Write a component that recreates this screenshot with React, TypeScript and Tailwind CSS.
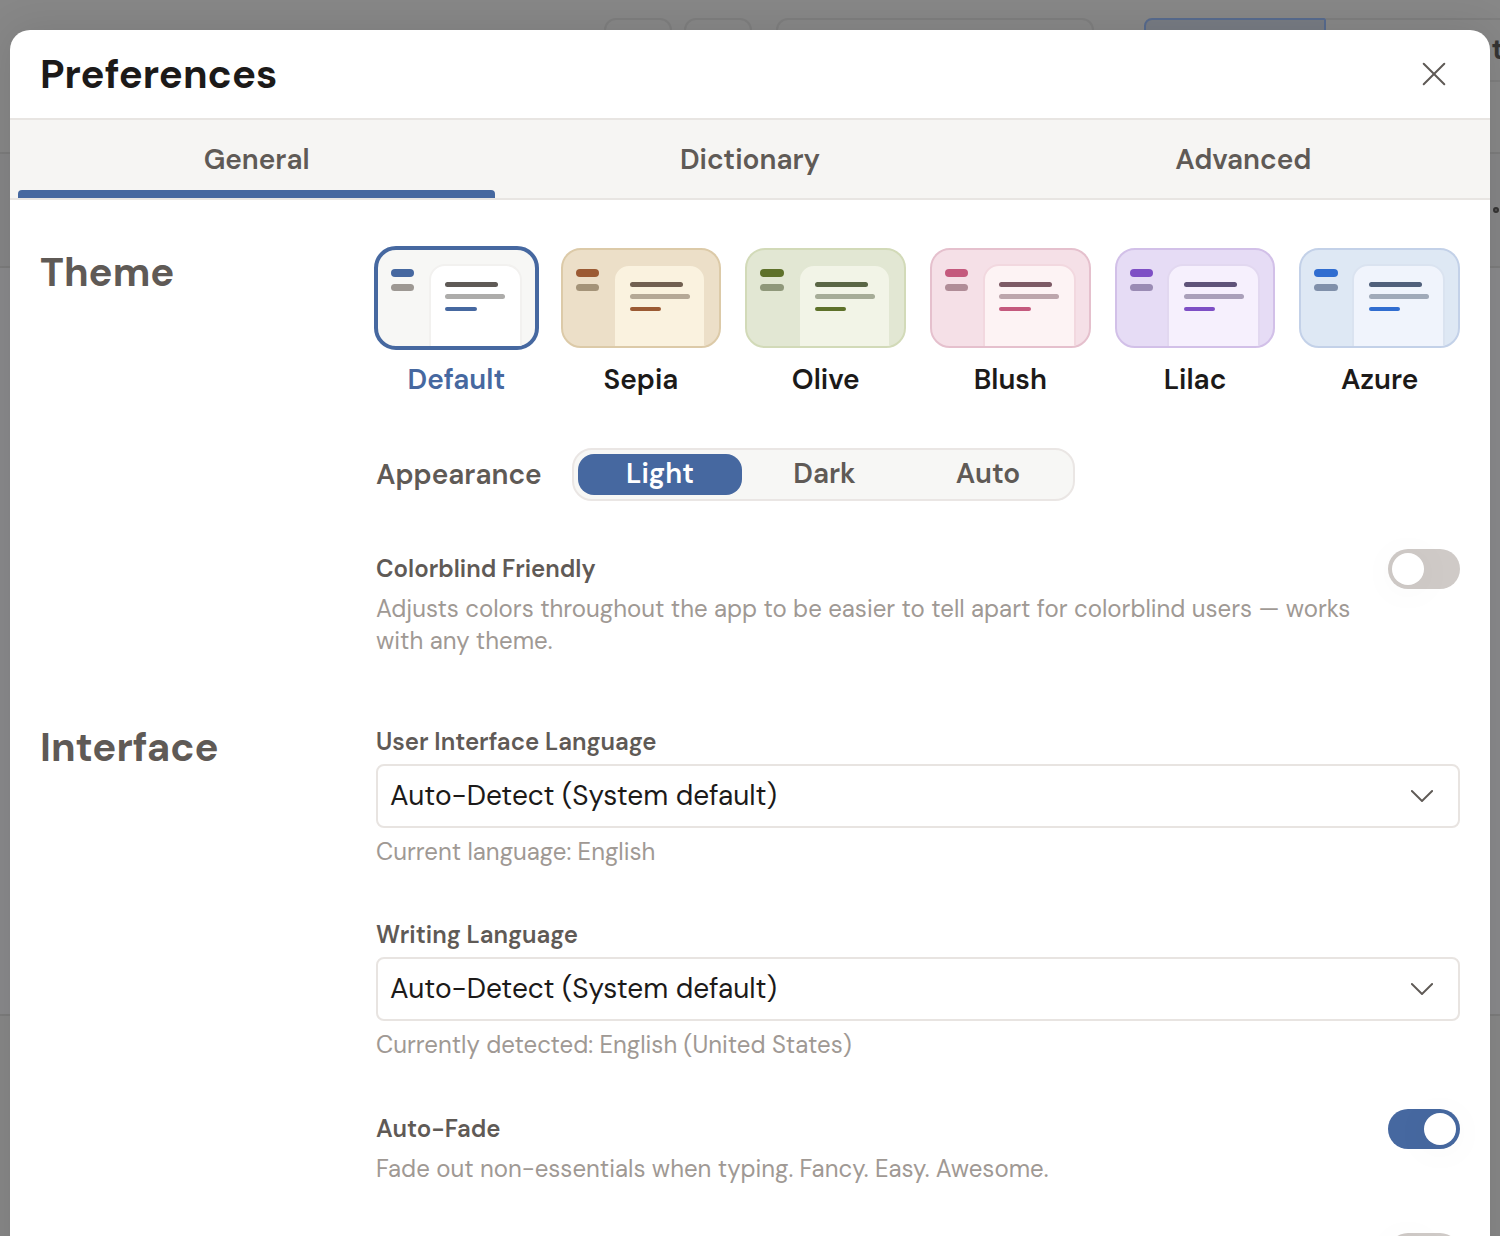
type ThemeOption = {
  name: string;
  card: string;
  page: string;
  accent: string;
  muted: string;
  heading: string;
  line: string;
};

const themes: ThemeOption[] = [
  { name: "Default", card: "bg-[#f7f7f5] border-[#4668a0]", page: "bg-white border-[#f2f1ef]", accent: "bg-[#4668a0]", muted: "bg-[#9d9893]", heading: "bg-[#5f5a56]", line: "bg-[#adacaa]" },
  { name: "Sepia", card: "bg-[#ecdfc8] border-[#dccaa8]", page: "bg-[#faf2df] border-[#ecdfc8]", accent: "bg-[#9b5a33]", muted: "bg-[#a49378]", heading: "bg-[#716051]", line: "bg-[#b5a896]" },
  { name: "Olive", card: "bg-[#e2e7d3] border-[#d2dab8]", page: "bg-[#f2f4e7] border-[#e2e7d3]", accent: "bg-[#5e712a]", muted: "bg-[#8f987a]", heading: "bg-[#5a6645]", line: "bg-[#a6ac97]" },
  { name: "Blush", card: "bg-[#f5e0e7] border-[#e5c0cd]", page: "bg-[#fdf3f4] border-[#f2d8df]", accent: "bg-[#c4597d]", muted: "bg-[#b08c97]", heading: "bg-[#7d5a65]", line: "bg-[#bda6ac]" },
  { name: "Lilac", card: "bg-[#e6dcf5] border-[#d2c0e8]", page: "bg-[#f6f0fd] border-[#e2d8f0]", accent: "bg-[#7e4fc5]", muted: "bg-[#9a8bb4]", heading: "bg-[#5f5379]", line: "bg-[#aaa0ba]" },
  { name: "Azure", card: "bg-[#dee8f4] border-[#c3d1e8]", page: "bg-[#f0f4fc] border-[#dae3f0]", accent: "bg-[#306dd0]", muted: "bg-[#8090aa]", heading: "bg-[#50607b]", line: "bg-[#a0aab9]" },
];

function ThemeCard({ theme, selected }: { theme: ThemeOption; selected: boolean }) {
  const frame = selected
    ? "-my-0.5 h-[104px] w-[calc(100%+4px)] rounded-[22px] border-4"
    : "h-[100px] w-full rounded-[20px] border-2";
  return (
    <button className="flex min-w-0 flex-1 flex-col items-center">
      <span className={`flex shrink-0 justify-between overflow-hidden px-[13px] ${frame} ${theme.card}`}>
        <span className="flex flex-col gap-[7px] pt-[19px]">
          <span className={`h-2 w-[23.4px] rounded-full ${theme.accent}`} />
          <span className={`h-[7px] w-[23.4px] rounded-full ${theme.muted}`} />
        </span>
        <span className={`mt-3.5 flex h-[90px] w-[93px] flex-col rounded-t-[16px] border-2 pl-[14.5px] pt-4 ${theme.page}`}>
          <span className={`h-[5px] w-[53px] rounded-full ${theme.heading}`} />
          <span className={`mt-[7px] h-[5px] w-[60px] rounded-full ${theme.line}`} />
          <span className={`mt-2 h-1 w-[31.5px] rounded-full ${theme.accent}`} />
        </span>
      </span>
      <span className={`mt-4 text-[28px] font-semibold leading-8 ${selected ? "text-[#4668a0]" : "text-[#1c1a19]"}`}>
        {theme.name}
      </span>
    </button>
  );
}

function Toggle({ on }: { on: boolean }) {
  return (
    <button role="switch" aria-checked={on} className={`flex h-10 w-[72px] shrink-0 rounded-full p-1 ${on ? "justify-end bg-[#4668a0]" : "bg-[#cfcac7]"}`}>
      <span className="size-8 rounded-full bg-white shadow-[0_4px_40px_rgba(0,0,0,0.05)]" />
    </button>
  );
}

function Select({ value }: { value: string }) {
  return (
    <button className="mt-1.5 flex h-16 w-full items-center justify-between rounded-lg border-2 border-[#e8e4e1] bg-white pl-3 pr-[25px] text-left text-[28px] leading-8 text-[#1c1a19]">
      <span>{value}</span>
      <svg className="h-3 w-[22px]" viewBox="0 0 22 12" fill="none" stroke="#5f5a56" strokeWidth="1.9" strokeLinecap="round" strokeLinejoin="round">
        <path d="M.9 1 11 11 21.1 1" />
      </svg>
    </button>
  );
}

function Backdrop() {
  return (
    <div className="absolute inset-0 bg-[#878787]">
      <div className="absolute inset-x-0 top-[152px] h-[116px] border-y-2 border-[#7c7c7c] bg-[#858586]" />
      <div className="absolute inset-x-0 top-[268px] h-[748px] border-b-2 border-[#7c7c7c] bg-[#89898b]" />
      <div className="absolute left-[604px] top-[18px] h-16 w-[68px] rounded-xl border-2 border-[#7e7e7e]" />
      <div className="absolute left-[684px] top-[18px] h-16 w-[68px] rounded-xl border-2 border-[#7e7e7e]" />
      <div className="absolute left-[776px] top-[18px] h-16 w-[318px] rounded-xl border-2 border-[#7e7e7e]" />
      <div className="absolute left-[1326px] top-[18px] h-16 w-[200px] border-y-2 border-[#7e7e7e]" />
      <div className="absolute left-[1144px] top-[18px] h-16 w-[182px] rounded-l-lg rounded-tr-[2px] border-2 border-[#576a8d] bg-[#777b83]" />
      <span className="absolute left-[1491.5px] top-[34px] text-[28px] font-bold leading-8 text-[#353433]">t</span>
      <span className="absolute left-[1493px] top-[207px] size-1.5 rounded-full border-2 border-[#353433] bg-[#5c5b5b]" />
    </div>
  );
}

const fieldTitle = "text-2xl font-semibold leading-8 text-[#5f5a56]";
const fieldHelp = "text-2xl leading-8 text-[#9f9994]";
const sectionTitle = "w-[336px] shrink-0 text-[40px] font-bold leading-[48px] text-[#5f5a56]";

export default function App() {
  return (
    <div className="relative h-[1236px] w-[1500px] overflow-hidden font-['DM_Sans',Inter,sans-serif]">
      <Backdrop />
      <div className="relative mx-2.5 mt-[30px] flex h-[1260px] flex-col overflow-hidden rounded-[20px] bg-white shadow-[0_0_40px_rgba(0,0,0,0.1)]">
        <header className="flex h-[90px] items-center justify-between border-b-2 border-[#e8e5e2] pl-[30px] pr-11">
          <h1 className="text-[40px] font-bold leading-[48px] text-[#1c1a19]">Preferences</h1>
          <button aria-label="Close">
            <svg className="size-6" viewBox="0 0 24 24" fill="none" stroke="#5f5a56" strokeWidth="2" strokeLinecap="round">
              <path d="m1.7 1.7 20.6 20.6M22.3 1.7 1.7 22.3" />
            </svg>
          </button>
        </header>

        <nav className="flex h-20 border-b-2 border-[#e8e5e2] bg-[#f6f5f3] text-[28px] font-semibold leading-8 text-[#5f5a56]">
          <button className="flex flex-1 flex-col items-center justify-between px-2 pt-6">
            <span>General</span>
            <span className="h-2 w-full rounded-t bg-[#4668a0]" />
          </button>
          <button className="flex flex-1 flex-col items-center px-2 pt-6">Dictionary</button>
          <button className="flex flex-1 flex-col items-center px-2 pt-6">Advanced</button>
        </nav>

        <main className="flex flex-col gap-[66px] px-[30px] pt-12">
          <section className="flex">
            <h2 className={sectionTitle}>Theme</h2>
            <div className="flex-1">
              <div className="flex gap-6">
                {themes.map((theme, i) => (
                  <ThemeCard key={theme.name} theme={theme} selected={i === 0} />
                ))}
              </div>

              <div className="mt-[52px] flex items-center gap-[30px]">
                <span className="w-[166px] whitespace-nowrap text-[28px] font-semibold leading-8 text-[#5f5a56]">Appearance</span>
                <div className="flex h-[53px] w-[503px] rounded-[20px] border-2 border-[#eae6e4] bg-[#f7f7f5] p-1 text-[28px] font-semibold leading-[39px] text-[#5f5a56]">
                  <button className="h-[41px] w-[164px] rounded-2xl bg-[#4668a0] pb-0.5 text-white">Light</button>
                  <button className="h-[41px] w-[164px] pb-0.5 pl-px">Dark</button>
                  <button className="h-[41px] w-[163px] pb-0.5 pl-px">Auto</button>
                </div>
              </div>

              <div className="mt-12 flex justify-between">
                <div className="pt-1">
                  <h3 className={fieldTitle}>Colorblind Friendly</h3>
                  <p className={`${fieldHelp} mt-2 w-[980px]`}>
                    Adjusts colors throughout the app to be easier to tell apart for colorblind users — works with any theme.
                  </p>
                </div>
                <Toggle on={false} />
              </div>
            </div>
          </section>

          <section className="flex">
            <h2 className={sectionTitle}>Interface</h2>
            <div className="flex-1 pt-[3px]">
              <h3 className={fieldTitle}>User Interface Language</h3>
              <Select value="Auto-Detect (System default)" />
              <p className={`${fieldHelp} mt-2`}>Current language: English</p>

              <h3 className={`${fieldTitle} mt-[51px]`}>Writing Language</h3>
              <Select value="Auto-Detect (System default)" />
              <p className={`${fieldHelp} mt-2`}>Currently detected: English (United States)</p>

              <div className="mt-12 flex justify-between">
                <div className="pt-1">
                  <h3 className={fieldTitle}>Auto-Fade</h3>
                  <p className={`${fieldHelp} mt-2`}>Fade out non-essentials when typing. Fancy. Easy. Awesome.</p>
                </div>
                <Toggle on />
              </div>

              <div className="mt-12 flex justify-end">
                <Toggle on={false} />
              </div>
            </div>
          </section>
        </main>
      </div>
    </div>
  );
}
